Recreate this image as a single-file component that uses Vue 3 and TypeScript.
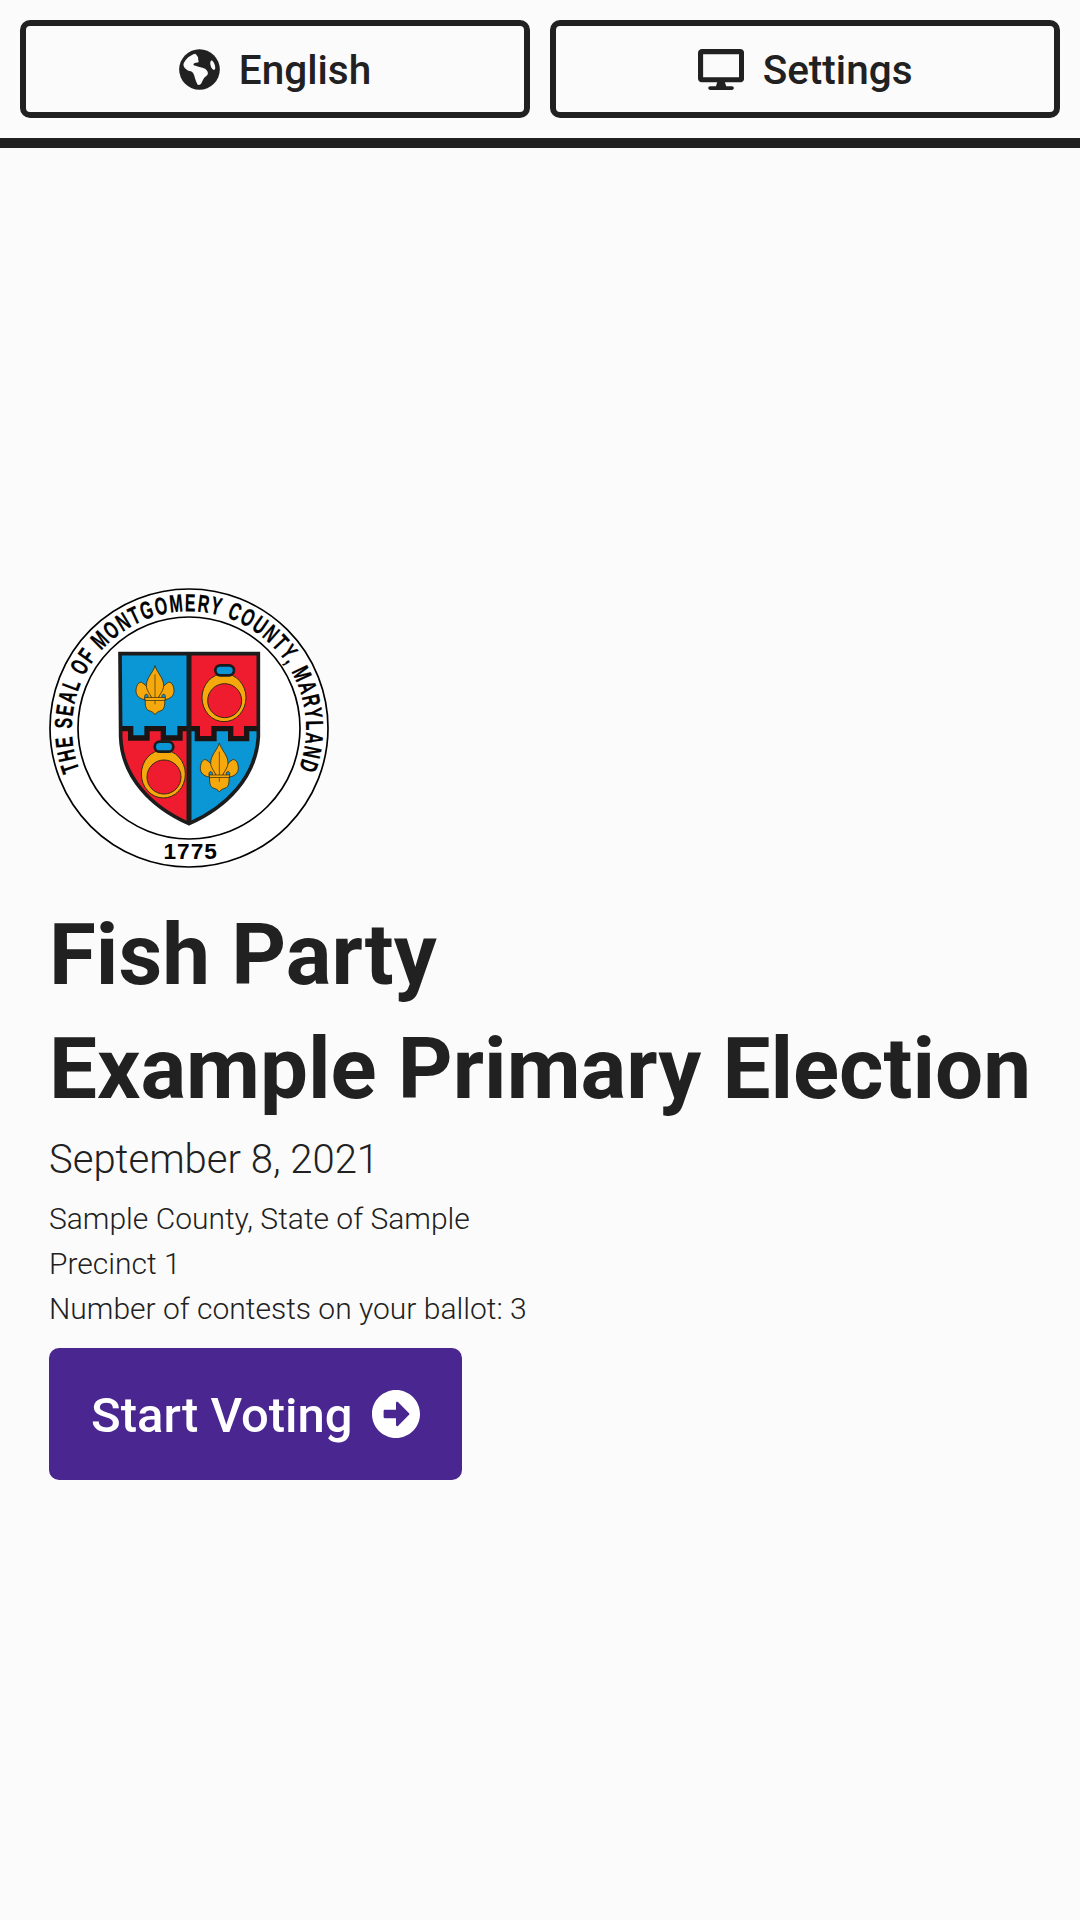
<script setup lang="ts">
const details: string[] = [
  'Sample County, State of Sample',
  'Precinct 1',
  'Number of contests on your ballot: 3',
]
</script>

<template>
  <div class="screen">
    <header class="topbar">
      <button class="outline-btn">
        <svg class="icon globe" viewBox="-60 -60 120 120" aria-hidden="true">
          <circle r="59.5" fill="currentColor" />
          <path fill="#fbfbfb" d="M-47 -16 C-40 -32 -28 -42 -12 -46 C-8 -40 -3 -38 -4 -32 C-5 -27 -1 -25 -3 -21 C-8 -19 -15 -21 -18 -15 C-16 -10 -8 -12 -3 -8 C4 -5 14 -6 21 2 C26 8 26 14 20 19 C13 24 10 30 7 37 C5 43 -1 47 -6 44 C-9 38 -11 32 -13 26 C-15 20 -16 14 -20 9 C-24 4 -32 6 -37 1 C-42 -3 -48 -8 -47 -16 Z" />
          <path fill="#fbfbfb" d="M37 -26 C42 -22 47 -10 46 -3 C45 2 41 3 37 -2 C33 -8 30 -17 32 -23 C33 -26 35 -27 37 -26 Z" />
        </svg>
        <span class="label">English</span>
      </button>
      <button class="outline-btn">
        <svg class="icon" viewBox="0 0 576 512" aria-hidden="true">
          <path fill="currentColor" d="M528 0H48C21.5 0 0 21.5 0 48v320c0 26.5 21.5 48 48 48h192l-16 48h-72c-13.3 0-24 10.7-24 24s10.7 24 24 24h272c13.3 0 24-10.7 24-24s-10.7-24-24-24h-72l-16-48h192c26.5 0 48-21.5 48-48V48c0-26.5-21.5-48-48-48zm-16 352H64V64h448v288z"/>
        </svg>
        <span class="label">Settings</span>
      </button>
    </header>

    <main class="content">
      <svg class="seal" viewBox="27 23 840 840" role="img" aria-label="Seal of Montgomery County, Maryland">
        <defs>
          <path id="seal-ring" d="M 119 569 A 351 351 0 1 1 775 569" />
          <clipPath id="shield-clip">
            <path d="M240 220 H655 V470 C648 590 560 680 447 730 C334 680 246 590 242 470 Z" />
          </clipPath>
          <g id="fleur">
            <g fill="#f5a90c" stroke="#3a2a10" stroke-width="2.5" stroke-linejoin="round">
              <path d="M-10 26 C-12 8 -20 -12 -40 -24 C-52 -26 -57 -10 -57 2 C-57 16 -46 26 -30 28 C-33 18 -30 10 -24 12 C-19 15 -20 22 -24 28 Z" />
              <path d="M10 26 C12 8 20 -12 40 -24 C52 -26 57 -10 57 2 C57 16 46 26 30 28 C33 18 30 10 24 12 C19 15 20 22 24 28 Z" />
              <path d="M0 -74 C-5 -54 -26 -38 -26 -14 C-26 0 -13 14 -8 26 H8 C13 14 26 0 26 -14 C26 -38 5 -54 0 -74 Z" />
              <path d="M-29 28 C-30 44 -28 58 -18 61 C-10 64 -4 66 0 73 C4 66 10 64 18 61 C28 58 30 44 29 28 Z" />
            </g>
            <path d="M0 -48 V42" stroke="#3a2a10" stroke-width="2" fill="none" />
            <rect x="-30" y="22" width="60" height="8" fill="#f5a90c" stroke="#3a2a10" stroke-width="2" />
          </g>
          <g id="ring">
            <ellipse cx="0" cy="0" rx="66" ry="72" fill="#f5a90c" stroke="#3a2a10" stroke-width="3" />
            <circle cx="2" cy="9" r="51" fill="#ee1c2e" stroke="#3a2a10" stroke-width="3" />
            <rect x="-26" y="-97" width="56" height="30" rx="15" fill="#0b96d6" stroke="#1c1c1c" stroke-width="8" />
          </g>
        </defs>

        <circle cx="447" cy="443" r="417" fill="#fff" stroke="#000" stroke-width="5" />
        <circle cx="447" cy="443" r="333" fill="#fff" stroke="#000" stroke-width="5" />

        <text class="seal-text" fill="#000" stroke="#000" stroke-width="0.8">
          <textPath href="#seal-ring" textLength="1358" lengthAdjust="spacingAndGlyphs">THE SEAL OF MONTGOMERY COUNTY, MARYLAND</textPath>
        </text>
        <text class="seal-year" x="452" y="836" text-anchor="middle" fill="#000">1775</text>

        <g clip-path="url(#shield-clip)">
          <rect x="230" y="210" width="220" height="540" fill="#ee1c2e" />
          <rect x="447" y="210" width="220" height="540" fill="#0b96d6" />
          <path fill="#0b96d6" d="M230 210 H447 V445 H420 V473 H370 V445 H321 V473 H272 V445 H230 Z" />
          <path fill="#ee1c2e" d="M447 210 H665 V445 H620 V475 H572 V445 H522 V475 H472 V445 H447 Z" />
          <path fill="none" stroke="#1c1412" stroke-width="16" d="M240 445 H272 V473 H321 V445 H370 V473 H420 V445 H472 V475 H522 V445 H572 V475 H620 V445 H660" />
        </g>
        <path fill="none" stroke="#1c1c1c" stroke-width="11" d="M240 220 H655 V470 C648 590 560 680 447 730 C334 680 246 590 242 470 Z" />
        <path d="M447 220 V730" stroke="#1c1c1c" stroke-width="15" />

        <use href="#fleur" x="345" y="330" />
        <use href="#fleur" x="538" y="562" />
        <use href="#ring" x="552" y="352" />
        <use href="#ring" x="370" y="581" />
      </svg>

      <h1 class="title">Fish Party<br />Example Primary Election</h1>
      <p class="date">September 8, 2021</p>
      <div class="details">
        <p v-for="line in details" :key="line" class="detail">{{ line }}</p>
      </div>

      <button class="start-btn">
        <span class="start-label">Start Voting</span>
        <svg class="start-icon" viewBox="8 8 496 496" aria-hidden="true">
          <path fill="currentColor" d="M256 8c137 0 248 111 248 248S393 504 256 504 8 393 8 256 119 8 256 8zM140 300h116v70.9c0 10.7 13 16.1 20.5 8.5l114.3-114.9c4.7-4.7 4.7-12.2 0-16.9l-114.3-115c-7.6-7.6-20.5-2.2-20.5 8.5V212H140c-6.6 0-12 5.4-12 12v64c0 6.6 5.4 12 12 12z"/>
        </svg>
      </button>
    </main>
  </div>
</template>

<style>
html, body { margin: 0; background: #fbfbfb; }
</style>

<style scoped>
.screen {
  display: flex;
  flex-direction: column;
  width: 1080px;
  height: 1920px;
  background: #fbfbfb;
  color: #212121;
  font-family: Roboto, "Liberation Sans", sans-serif;
  overflow: hidden;
}
.topbar {
  display: grid;
  grid-template-columns: 1fr 1fr;
  gap: 20px;
  padding: 20px;
  border-bottom: 10px solid #212121;
}
.outline-btn {
  display: flex;
  align-items: center;
  justify-content: center;
  gap: 19px;
  height: 98px;
  padding: 0;
  background: transparent;
  border: 6px solid #212121;
  border-radius: 10px;
  color: #212121;
  font: 500 40.5px/1 Roboto, sans-serif;
}
.label { padding-top: 3px; }
.icon { height: 41px; display: block; }
.globe { width: 41px; }
.content {
  flex: 1;
  display: flex;
  flex-direction: column;
  align-items: flex-start;
  justify-content: center;
  padding: 0 49px;
}
.seal { width: 280px; height: 280px; display: block; }
.seal-text { font: 700 74px "Liberation Sans", sans-serif; letter-spacing: 7px; }
.seal-year { font: 700 68px "Liberation Sans", sans-serif; letter-spacing: 3px; }
.title {
  margin: 30px 0 0;
  font: 700 85.33px/114px Roboto, sans-serif;
  color: #212121;
  white-space: nowrap;
}
.date { margin: 4px 0 0; font: 300 40px/60px Roboto, sans-serif; }
.details { margin-top: 6px; }
.detail { margin: 0; font: 300 30px/45px Roboto, sans-serif; }
.start-btn {
  display: flex;
  align-items: center;
  gap: 19px;
  margin-top: 17px;
  height: 132px;
  padding: 0 42px;
  background: #4a2690;
  color: #fff;
  border: 0;
  border-radius: 10px;
  font: 500 49px/1 Roboto, sans-serif;
}
.start-label { padding-top: 2px; }
.start-icon { width: 48px; height: 48px; display: block; }
</style>
